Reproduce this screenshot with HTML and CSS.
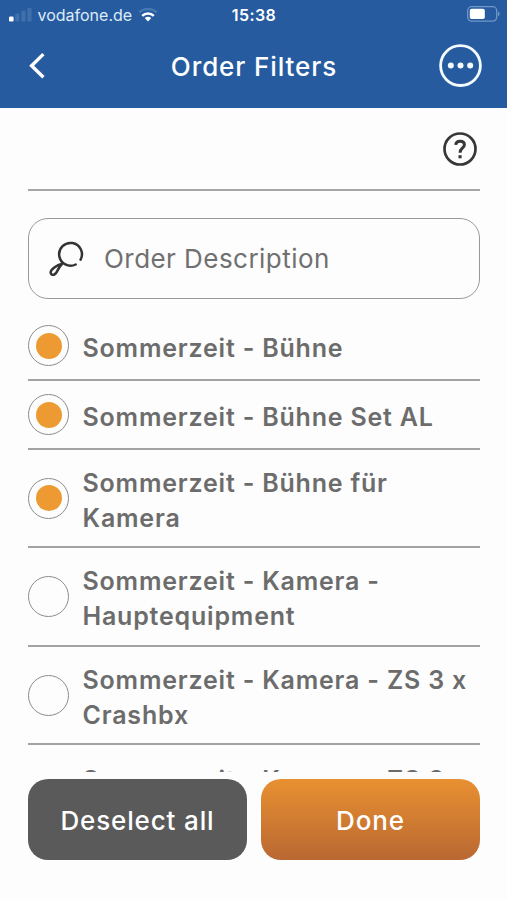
FILE: index.html
```html
<!DOCTYPE html>
<html lang="en">
<head>
<meta charset="utf-8">
<title>Order Filters</title>
<link rel="stylesheet" href="styles.css">
</head>
<body>
<header class="header">
  <div class="status">
    <div class="carrier">
      <svg class="signal" width="24" height="14" viewBox="0 0 24 14"><rect x="0" y="8.5" width="4.6" height="5" rx="1.2" fill="#fff"/><g fill="#3e70ac"><rect x="6.2" y="5.5" width="4.2" height="8" rx="1"/><rect x="12.4" y="2.8" width="4.2" height="10.7" rx="1"/><rect x="18.4" y="0" width="4.2" height="13.5" rx="1"/></g></svg>
      <span class="carrier-name">vodafone.de</span>
      <svg width="20" height="14" viewBox="0 0 20 14" fill="none"><path d="M1.2 4.4A13 13 0 0 1 18.8 4.4" stroke="#4277af" stroke-width="2.5"/><path d="M4.2 7.8A8.5 8.5 0 0 1 15.8 7.8" stroke="#fff" stroke-width="2.5"/><path d="M6.7 10.1A5 5 0 0 1 13.3 10.1L10 13.5Z" fill="#fff"/></svg>
    </div>
    <span class="time">15:38</span>
    <svg class="battery" width="33" height="16" viewBox="0 0 33 16"><rect x="0.7" y="0.7" width="29" height="14.4" rx="4" fill="none" stroke="#6f97c8" stroke-width="1.3"/><rect x="2.8" y="2.8" width="15" height="10.2" rx="1.8" fill="#fff"/><path d="M31 5.5q1.6 .5 1.6 2.4t-1.6 2.4z" fill="#6f97c8"/></svg>
  </div>
  <div class="nav">
    <svg class="back" width="18" height="28" viewBox="0 0 18 28"><path d="M15.4 2.1L3.6 13.7L15.4 25.3" fill="none" stroke="#fff" stroke-width="3.4"/></svg>
    <h1 class="title">Order Filters</h1>
    <svg width="44" height="44" viewBox="0 0 44 44"><circle cx="22.5" cy="21.6" r="19.9" fill="none" stroke="#f4fbff" stroke-width="2.8"/><g fill="#f4fbff"><circle cx="12.8" cy="21.6" r="3"/><circle cx="22.5" cy="21.6" r="3"/><circle cx="32.2" cy="21.6" r="3"/></g></svg>
  </div>
</header>
<main class="content">
  <div class="help">
    <svg width="36" height="36" viewBox="0 0 36 36" fill="none" stroke="#373737"><circle cx="18" cy="18" r="15.5" stroke-width="2.7"/><path d="M13.7 13.8C14 11.2 15.7 10.2 18 10.2C20.6 10.2 22.4 11.5 22.4 13.7C22.4 17 18.1 16.9 18.1 21.7" stroke-width="3"/><rect x="16.5" y="24.2" width="3.1" height="3.1" fill="#373737" stroke="none"/></svg>
  </div>
  <div class="search">
    <svg class="search-icon" width="36" height="36" viewBox="0 0 36 36" fill="none" stroke="#333" stroke-width="2.5" stroke-linecap="round"><path d="M27.7 23.5A11.4 11.4 0 1 1 32.6 18.7"/><path d="M14.3 22.7C8.5 24 2.7 28.3 2.6 31.5C2.6 33.4 4.5 34.3 6.4 33.5C9.6 32.1 9.4 26.8 14.3 22.7Z"/></svg>
    <span class="placeholder">Order Description</span>
  </div>
  <div class="list">
    <div class="row"><span class="radio on"></span><span class="label">Sommerzeit - Bühne</span></div>
    <div class="row"><span class="radio on"></span><span class="label">Sommerzeit - Bühne Set AL</span></div>
    <div class="row tall"><span class="radio on"></span><span class="label">Sommerzeit - Bühne für<br>Kamera</span></div>
    <div class="row tall"><span class="radio"></span><span class="label">Sommerzeit - Kamera -<br>Hauptequipment</span></div>
    <div class="row tall"><span class="radio"></span><span class="label">Sommerzeit - Kamera - ZS 3 x<br>Crashbx</span></div>
    <div class="row tall partial"><span class="radio"></span><span class="label">Sommerzeit - Kamera - ZS 3</span></div>
  </div>
</main>
<footer class="actions">
  <div class="button deselect">Deselect all</div>
  <div class="button done">Done</div>
</footer>
</body>
</html>
```

FILE: styles.css
```css
* { box-sizing: border-box; }
body {
  margin: 0;
  width: 507px;
  height: 900px;
  overflow: hidden;
  display: flex;
  flex-direction: column;
  background: #fdfdfd;
  font-family: Inter, sans-serif;
}
svg { display: block; flex: none; }
.header {
  height: 108px;
  flex: none;
  background: #265b9f;
  color: #fff;
}
.status {
  height: 30px;
  padding: 0 7px 0 9px;
  display: grid;
  grid-template-columns: 1fr auto 1fr;
  align-items: center;
}
.carrier { display: flex; align-items: center; }
.carrier-name {
  width: 94px;
  margin: 0 6px 0 4.5px;
  font-size: 16px;
  letter-spacing: 0px;
  color: #dfebf8;
  white-space: nowrap;
}
.time { font-size: 16px; font-weight: 600; letter-spacing: 0.4px; margin-left: -1px; }
.battery { justify-self: end; margin-top: -2px; }
.nav {
  height: 72px;
  padding: 0 25px 0 28px;
  display: grid;
  grid-template-columns: 44px 1fr 44px;
  align-items: center;
}
.title {
  margin: 1px 0 0 -2px;
  font-size: 26px;
  font-weight: 500;
  letter-spacing: 0.9px;
  text-align: center;
}
.content {
  height: 664px;
  flex: none;
  padding: 0 27px 0 28px;
  overflow: hidden;
}
.help {
  height: 83px;
  padding: 23px 2px 0;
  border-bottom: 2px solid #a6a6a6;
  display: flex;
  justify-content: flex-end;
}
.search {
  height: 81px;
  margin: 27px 0 13px;
  padding-left: 19px;
  border: 1.5px solid #999;
  border-radius: 20px;
  display: flex;
  align-items: center;
  gap: 20px;
}
.placeholder {
  font-size: 26px;
  letter-spacing: 0.45px;
  color: #707070;
}
.row {
  height: 69px;
  padding-top: 0.4px;
  border-bottom: 2px solid #a3a3a3;
  display: flex;
  align-items: center;
  gap: 13.5px;
}
.tall { height: 98.4px; }
.radio {
  width: 41px;
  height: 41px;
  flex: none;
  border: 1.6px solid #8c8c8c;
  border-radius: 50%;
  display: grid;
  place-items: center;
}
.on::after {
  content: "";
  width: 26px;
  height: 26px;
  border-radius: 50%;
  background: #ed9a32;
}
.label {
  padding-top: 5.2px;
  font-size: 25px;
  line-height: 35px;
  font-weight: 600;
  letter-spacing: 0.8px;
  color: #6c6c6c;
  white-space: nowrap;
}
.partial .label {
  align-self: flex-start;
  margin-top: 12px;
}
.actions {
  padding: 7px 27px 0 28px;
  display: flex;
  gap: 14px;
}
.button {
  height: 81px;
  flex: 1;
  border-radius: 20px;
  display: flex;
  align-items: center;
  justify-content: center;
  padding-top: 1px;
  font-size: 26px;
  font-weight: 500;
  letter-spacing: 0.85px;
  color: #fff;
}
.deselect { background: #5a5a5a; }
.done { background: linear-gradient(#e89031, #b96832); }
```
